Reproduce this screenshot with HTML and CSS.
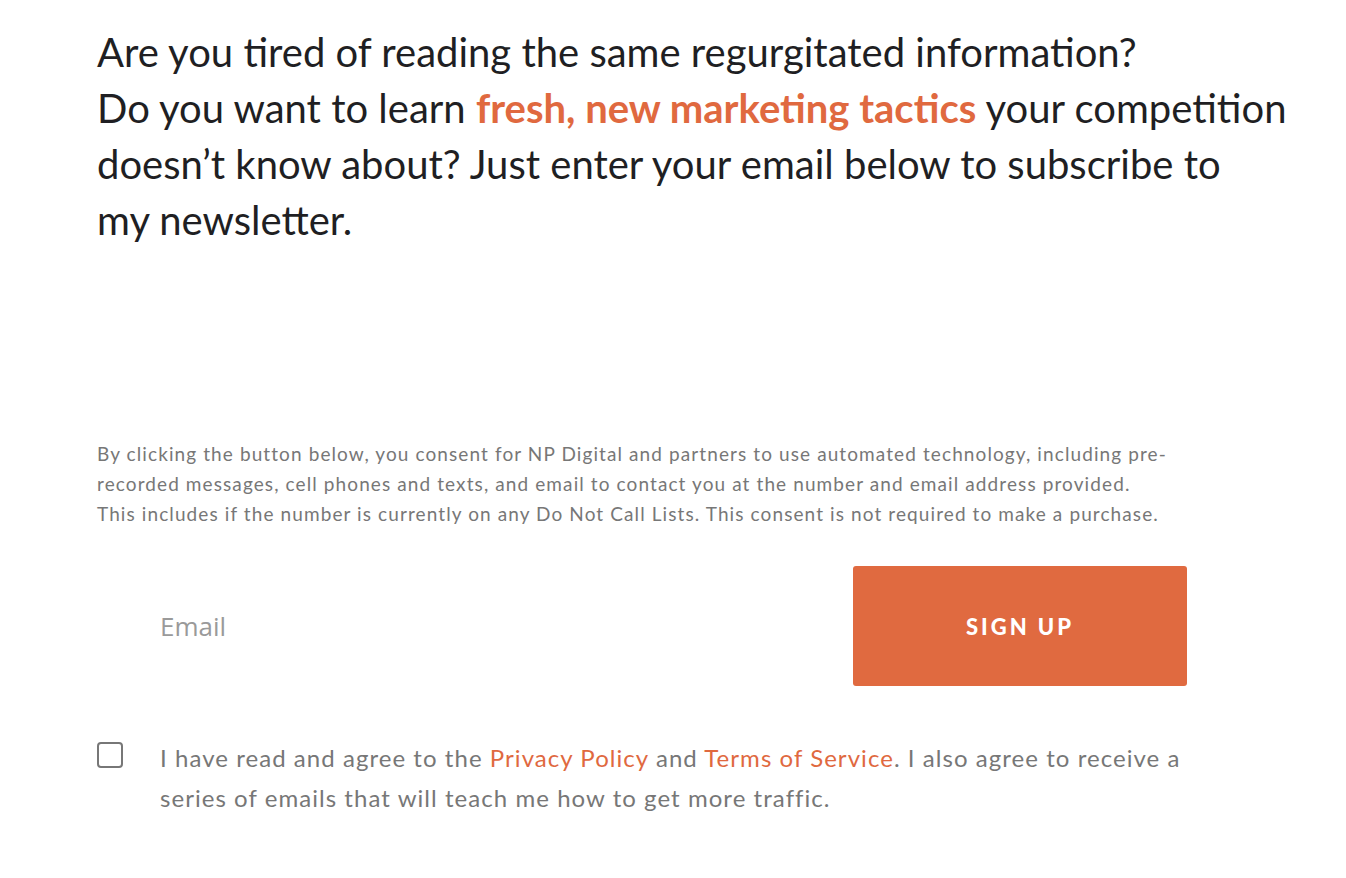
FILE: index.html
```html
<!DOCTYPE html>
<html lang="en">
<head>
  <title>Newsletter</title>
  <link rel="stylesheet" href="styles.css">
</head>
<body>

  <div class="wrap">
    <!-- Intro copy -->
    <p class="intro">
      Are you tired of reading the same regurgitated information?<br>
      Do you want to learn <strong>fresh, new marketing tactics</strong> your competition doesn’t know about? Just enter your email below to subscribe to my&nbsp;newsletter.
    </p>

    <p class="consent">
      By clicking the button below, you consent for NP Digital and partners to use automated technology, including pre-recorded messages, cell phones and texts, and email to contact you at the number and email address provided. This includes if the number is currently on any Do Not Call Lists. This consent is not required to make a purchase.
    </p>

    <!-- Signup form -->
    <form class="signup">
      <input type="email" class="email-input" placeholder="Email">
      <button type="button" class="signup-button">SIGN UP</button>
    </form>

    <label class="agree">
      <span class="box"></span>
      <span class="agree-text">I have read and agree to the <a href="#">Privacy Policy</a> and <a href="#">Terms of Service</a>. I also agree to receive a series of emails that will teach me how to get more traffic.</span>
    </label>
  </div>

</body>
</html>
```

FILE: styles.css
```css
body {
  margin: 0;
  background: #fff;
  font-family: Lato, "Open Sans", sans-serif;
  color: #222;
}

.wrap {
  padding: 24px 0 0 97px;
  width: 1090px;
}

.intro {
  margin: 0;
  width: 1192px;
  font-size: 40px;
  line-height: 56px;
  color: #1f1f23;
}

.intro strong {
  color: #e0693f;
  font-weight: 700;
}

.consent {
  margin: 191px 0 0;
  max-width: 1072px;
  font-size: 19px;
  line-height: 30px;
  letter-spacing: 1.1px;
  color: #777;
}

.signup {
  display: flex;
  justify-content: space-between;
  margin-top: 37px;
}

.email-input {
  border: none;
  outline: none;
  width: 560px;
  height: 120px;
  padding: 0 0 0 63px;
  font-family: "Open Sans", sans-serif;
  font-size: 26px;
  color: #333;
  background: transparent;
}

.email-input::placeholder {
  color: #9a9a9a;
}

.signup-button {
  width: 334px;
  height: 120px;
  border: none;
  border-radius: 3px;
  background-color: #e06a40;
  color: #fff;
  font-family: Lato, sans-serif;
  font-weight: 900;
  font-size: 22px;
  letter-spacing: 3px;
  cursor: pointer;
}

.agree {
  display: flex;
  gap: 37px;
  margin-top: 52px;
  font-size: 24px;
  line-height: 40px;
  letter-spacing: 1.05px;
  color: #777;
}

.box {
  flex: none;
  width: 22px;
  height: 22px;
  margin-top: 4px;
  border: 2px solid #777;
  border-radius: 4px;
}

.agree a {
  color: #e0693f;
  text-decoration: none;
}
```
